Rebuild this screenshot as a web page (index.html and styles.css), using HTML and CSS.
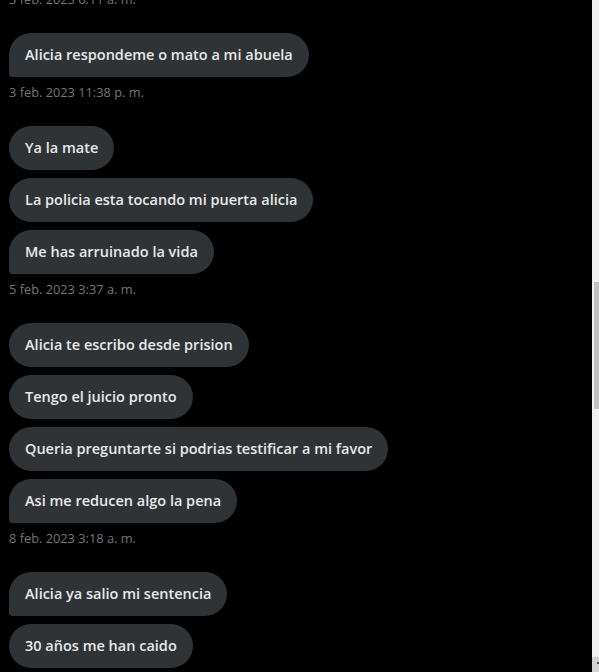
FILE: index.html
```html
<!DOCTYPE html>
<html lang="es">
<head>
<meta charset="utf-8">
<title>Mensajes</title>
<link rel="stylesheet" href="styles.css">
</head>
<body>
<div class="page">
  <main class="chat">
    <div class="stamp">3 feb. 2023 6:11 a. m.</div>
    <section class="group">
      <div class="bubble">Alicia respondeme o mato a mi abuela</div>
      <div class="stamp">3 feb. 2023 11:38 p. m.</div>
    </section>
    <section class="group">
      <div class="bubble">Ya la mate</div>
      <div class="bubble">La policia esta tocando mi puerta alicia</div>
      <div class="bubble">Me has arruinado la vida</div>
      <div class="stamp">5 feb. 2023 3:37 a. m.</div>
    </section>
    <section class="group">
      <div class="bubble">Alicia te escribo desde prision</div>
      <div class="bubble">Tengo el juicio pronto</div>
      <div class="bubble">Queria preguntarte si podrias testificar a mi favor</div>
      <div class="bubble">Asi me reducen algo la pena</div>
      <div class="stamp">8 feb. 2023 3:18 a. m.</div>
    </section>
    <section class="group">
      <div class="bubble">Alicia ya salio mi sentencia</div>
      <div class="bubble">30 años me han caido</div>
    </section>
  </main>
  <div class="scrollbar">
    <div class="track"><div class="thumb"></div></div>
    <div class="arrow"><span class="glyph"></span></div>
  </div>
</div>
</body>
</html>
```
FILE: styles.css
```css
html, body {
  margin: 0;
  padding: 0;
  background: #000;
  height: 100%;
  overflow: hidden;
}
.page {
  display: flex;
  height: 672px;
  width: 599px;
}
.chat {
  flex: 1;
  overflow: hidden;
  padding-left: 9px;
  display: flex;
  flex-direction: column;
  margin-top: -9px;
  font-family: "Open Sans", "Liberation Sans", Arial, sans-serif;
}
.group {
  display: flex;
  flex-direction: column;
  align-items: flex-start;
  gap: 8px;
}
.bubble {
  background: #2f3336;
  color: #e7e9ea;
  font-size: 14.5px;
  font-weight: 600;
  line-height: 20px;
  padding: 12px 16px;
  border-radius: 24px;
  white-space: nowrap;
}
.group .bubble:nth-last-child(2) {
  border-bottom-left-radius: 4px;
}
.stamp {
  color: #71767b;
  font-size: 12.8px;
  line-height: 16px;
  margin-bottom: 26px;
}
.group .stamp {
  margin-top: -1px;
}
.scrollbar {
  width: 7px;
  flex: none;
  background: #f1f1f1;
  display: flex;
  flex-direction: column;
}
.track {
  flex: 1;
  padding: 282px 0 0 2px;
}
.thumb {
  height: 127px;
  background: #c1c1c1;
}
.arrow {
  height: 15px;
  background: #d2d2d2;
  position: relative;
}
.glyph {
  position: absolute;
  left: 5px;
  top: 5px;
  width: 2px;
  height: 2px;
  background: #505050;
}
```
